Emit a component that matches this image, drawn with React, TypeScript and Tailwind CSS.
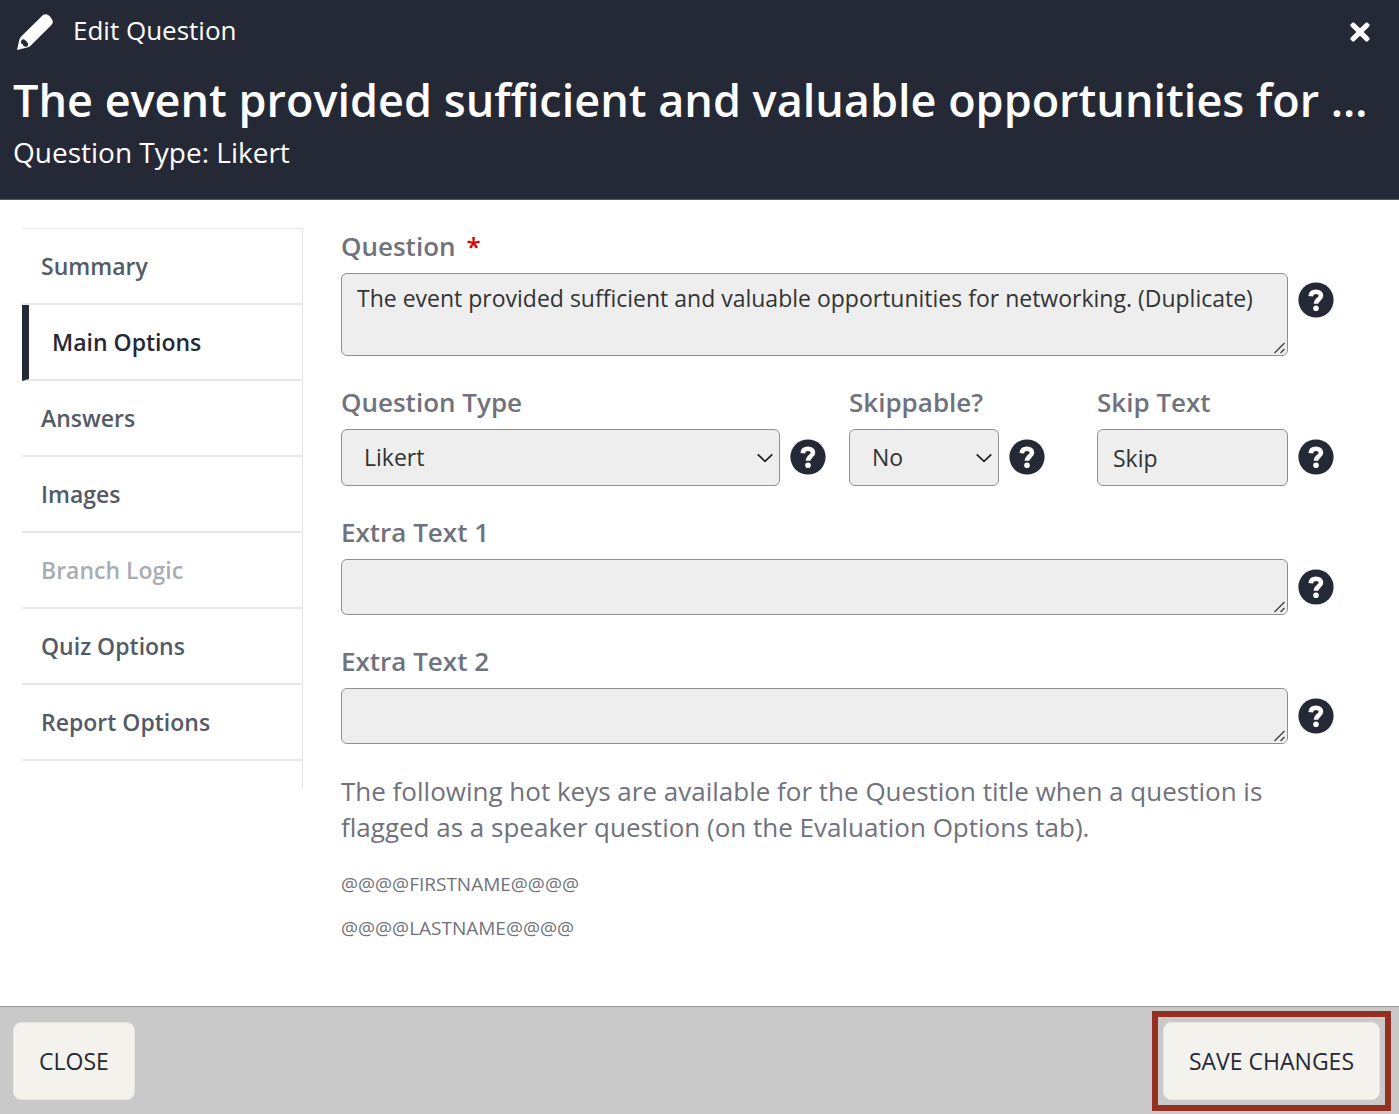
import clsx from 'clsx';
import { useState, type ReactNode } from 'react';
import { FaTimes } from 'react-icons/fa';

const TABS = [
  { label: 'Summary' },
  { label: 'Main Options' },
  { label: 'Answers' },
  { label: 'Images' },
  { label: 'Branch Logic', disabled: true },
  { label: 'Quiz Options' },
  { label: 'Report Options' },
];

const fieldClass =
  'block w-full min-w-0 rounded-md border border-[#8f8f8f] bg-[#eeeeee] text-[23px] text-[#333333] outline-none';

function PencilIcon() {
  return (
    <svg viewBox="0 0 36 36" className="size-9 fill-white" aria-hidden="true">
      <path
        fillRule="evenodd"
        d="M25.5 1.5 Q28.2-.9 31.2 1 Q34.2 3 35.6 6.4 Q36.4 9 34.4 11 L13.8 31.4 Q12.2 33 10.2 33.4 L0 36 L2.3 25.8 Q2.8 23.8 4.2 22.4 Z M4.4 26.4 Q3.4 28.2 4.4 29.6 Q5.8 30 6.6 32 Q8.6 33.4 10.4 32.2 Q11.6 31 10.8 29.2 Q9.6 26.6 7.2 25.5 Q5.4 25 4.4 26.4 Z"
      />
    </svg>
  );
}

function ChevronIcon() {
  return (
    <svg
      viewBox="0 0 16 9"
      className="pointer-events-none absolute top-1/2 right-[7px] h-[9px] w-4 -translate-y-1/2 fill-none stroke-[#222222] stroke-[1.8]"
      aria-hidden="true"
    >
      <path d="M.7.8 8 7.8 15.3.8" />
    </svg>
  );
}

function ResizeGrip() {
  return (
    <svg
      viewBox="0 0 14 14"
      className="pointer-events-none absolute right-px bottom-px size-3.5 fill-none stroke-[#444444]"
      aria-hidden="true"
    >
      <path d="M0 0H14V9Q13.5 13.5 9 14H0Z" className="fill-[#eeeeee] stroke-none" />
      <path d="M1.5 12 11.5 2M7.5 12 11.5 8" strokeWidth="1.4" />
    </svg>
  );
}

function HelpButton({ topic }: { topic: string }) {
  return (
    <button type="button" aria-label={`Help: ${topic}`} className="shrink-0">
      <svg viewBox="0 0 36 36" className="size-9" aria-hidden="true">
        <circle cx="18" cy="18" r="17.6" className="fill-[#252936]" />
        <path
          d="M12.7 14.2C13 11.2 15.2 9.8 18 9.8C21 9.8 23 11.3 23 13.8C23 17.4 18.1 17.2 18 21.8"
          className="fill-none stroke-white"
          strokeWidth="4.6"
        />
        <circle cx="18" cy="26.3" r="2.8" className="fill-white" />
      </svg>
    </button>
  );
}

type FieldProps = {
  id: string;
  label: string;
  required?: boolean;
  alignTop?: boolean;
  className?: string;
  children: ReactNode;
};

function Field({ id, label, required, alignTop, className, children }: FieldProps) {
  return (
    <div className={className}>
      <label htmlFor={id} className="mb-[9px] block text-[26px] leading-9 font-semibold text-[#70727c]">
        {label}
        {required && <span className="ml-[11px] text-[#e00000]">*</span>}
      </label>
      <div className="flex items-start gap-[10px]">
        <div className="relative min-w-0 flex-1">{children}</div>
        <div className={clsx('flex', alignTop ? 'pt-[9px]' : 'pt-[10px]')}>
          <HelpButton topic={label} />
        </div>
      </div>
    </div>
  );
}

export default function App() {
  const [activeTab, setActiveTab] = useState('Main Options');

  return (
    <div className="flex min-h-screen flex-col bg-white font-['Open_Sans','Noto_Sans',sans-serif]">
      {/* Header */}
      <header className="border-b border-[#555555] bg-[#252936] px-[13px] pb-[26px] text-white">
        <div className="flex h-16 items-center justify-between pr-3 pl-1">
          <div className="flex items-center gap-5">
            <PencilIcon />
            <span className="pb-1 text-[26px] leading-8">Edit Question</span>
          </div>
          <button type="button" aria-label="Close dialog">
            <FaTimes size={28} />
          </button>
        </div>
        <h1 className="truncate pt-1 text-[45px] leading-[63px] font-semibold">
          The event provided sufficient and valuable opportunities for networking. (Duplicate)
        </h1>
        <p className="text-[28px] leading-[42px]">Question Type: Likert</p>
      </header>

      <div className="flex flex-1 items-start">
        {/* Tabs */}
        <nav className="mt-7 ml-[22px] w-[281px] shrink-0 border-t border-r border-[#e5e7eb] pb-7">
          {TABS.map((tab) => (
            <button
              key={tab.label}
              type="button"
              disabled={tab.disabled}
              onClick={() => setActiveTab(tab.label)}
              className={clsx(
                'flex h-[76px] w-full items-center border-b-2 border-b-[#e5e8ec] text-left text-[23px] font-semibold',
                tab.label === activeTab
                  ? 'border-l-[7px] border-l-[#252936] pl-[23px] text-[#252936]'
                  : 'pl-[19px]',
                tab.label !== activeTab && (tab.disabled ? 'text-[#a9adb2]' : 'text-[#535b65]'),
              )}
            >
              {tab.label}
            </button>
          ))}
        </nav>

        {/* Form */}
        <main className="min-w-0 flex-1 pt-7 pr-[65px] pb-10 pl-[38px]">
          <form className="flex flex-col gap-7">
            <Field id="question" label="Question" required alignTop>
              <textarea
                id="question"
                defaultValue="The event provided sufficient and valuable opportunities for networking. (Duplicate)"
                className={clsx(fieldClass, 'h-[83px] px-[15px] py-2 leading-8')}
              />
              <ResizeGrip />
            </Field>

            <div className="grid grid-cols-[508fr_248fr_237fr]">
              <Field id="question-type" label="Question Type" className="pr-[23px]">
                <select id="question-type" className={clsx(fieldClass, 'h-[57px] appearance-none px-[22px]')}>
                  <option>Likert</option>
                </select>
                <ChevronIcon />
              </Field>
              <Field id="skippable" label="Skippable?" className="pr-[52px]">
                <select id="skippable" className={clsx(fieldClass, 'h-[57px] appearance-none px-[22px]')}>
                  <option>No</option>
                  <option>Yes</option>
                </select>
                <ChevronIcon />
              </Field>
              <Field id="skip-text" label="Skip Text">
                <input id="skip-text" type="text" defaultValue="Skip" className={clsx(fieldClass, 'h-[57px] px-[15px]')} />
              </Field>
            </div>

            <Field id="extra-text-1" label="Extra Text 1">
              <textarea id="extra-text-1" className={clsx(fieldClass, 'h-14 px-[15px] py-2 leading-8')} />
              <ResizeGrip />
            </Field>

            <Field id="extra-text-2" label="Extra Text 2">
              <textarea id="extra-text-2" className={clsx(fieldClass, 'h-14 px-[15px] py-2 leading-8')} />
              <ResizeGrip />
            </Field>
          </form>

          <p className="mt-[29px] text-[26px] leading-9 text-[#70727c]">
            The following hot keys are available for the Question title when a question is flagged as a speaker
            question (on the Evaluation Options tab).
          </p>
          <p className="mt-[25px] text-[19px] leading-7 text-[#70727c]">@@@@FIRSTNAME@@@@</p>
          <p className="mt-4 text-[19px] leading-7 text-[#70727c]">@@@@LASTNAME@@@@</p>
        </main>
      </div>

      {/* Footer */}
      <footer className="flex items-center justify-between border-t border-[#979797] bg-[#c9c9c9] pt-1 pr-2 pb-[3px] pl-[13px]">
        <button
          type="button"
          className="h-[78px] rounded-lg border border-[#e6e5e0] bg-[#f3f2ed] px-[25px] text-[23px] text-[#252936]"
        >
          CLOSE
        </button>
        <div className="border-6 border-[#93301f] p-[5px]">
          <button
            type="button"
            className="block h-[78px] rounded-lg border border-[#e6e5e0] bg-[#f3f2ed] px-[25px] text-[23px] text-[#252936]"
          >
            SAVE CHANGES
          </button>
        </div>
      </footer>
    </div>
  );
}
